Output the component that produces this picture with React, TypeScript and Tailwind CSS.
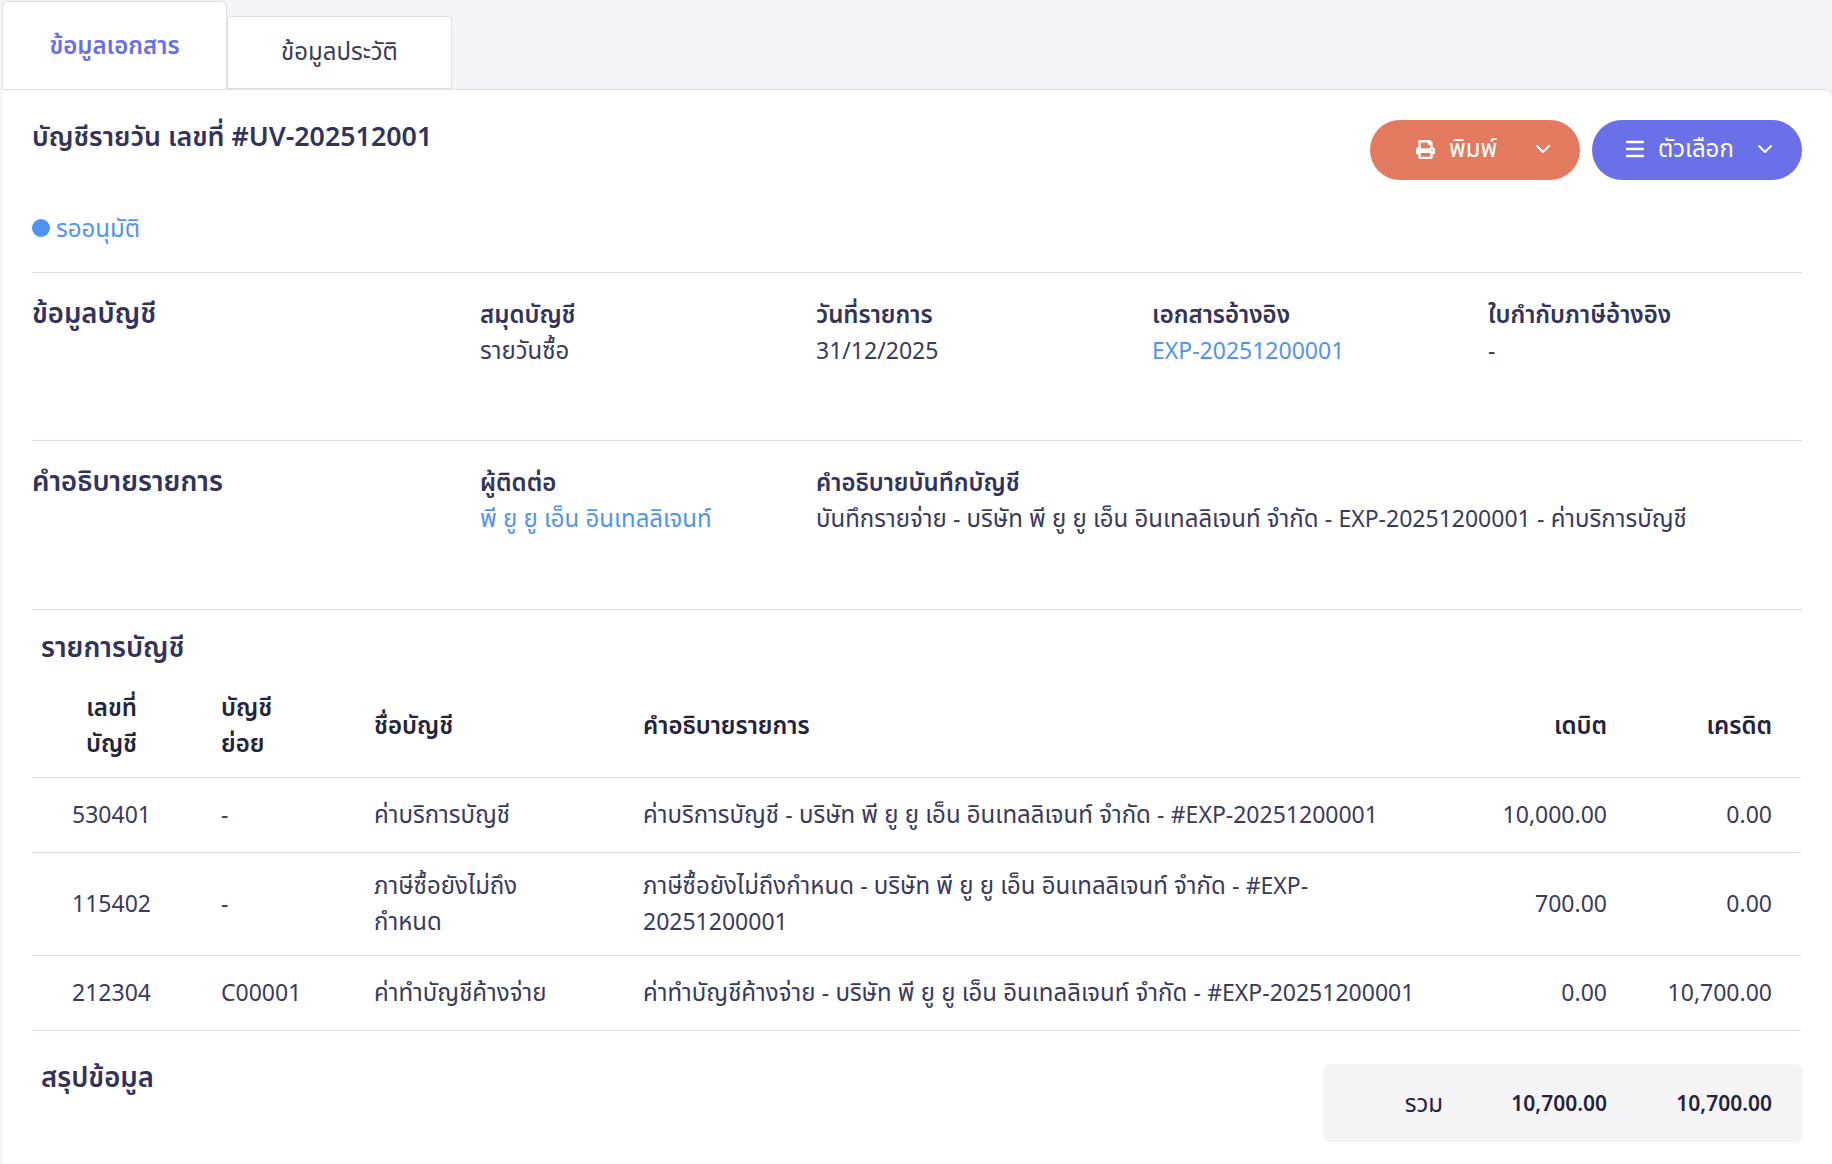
import { ChevronDown, Menu } from 'lucide-react'
import { FaPrint } from 'react-icons/fa'

const rows = [
  { code: '530401', sub: '-', name: 'ค่าบริการบัญชี', desc: 'ค่าบริการบัญชี - บริษัท พี ยู ยู เอ็น อินเทลลิเจนท์ จำกัด - #EXP-20251200001', debit: '10,000.00', credit: '0.00' },
  { code: '115402', sub: '-', name: 'ภาษีซื้อยังไม่ถึงกำหนด', desc: 'ภาษีซื้อยังไม่ถึงกำหนด - บริษัท พี ยู ยู เอ็น อินเทลลิเจนท์ จำกัด - #EXP-20251200001', debit: '700.00', credit: '0.00' },
  { code: '212304', sub: 'C00001', name: 'ค่าทำบัญชีค้างจ่าย', desc: 'ค่าทำบัญชีค้างจ่าย - บริษัท พี ยู ยู เอ็น อินเทลลิเจนท์ จำกัด - #EXP-20251200001', debit: '0.00', credit: '10,700.00' },
]

// latin runs sit a little smaller than the thai around them
function Mixed({ text }: { text: string }) {
  return (
    <>
      {text.split(/([A-Za-z0-9#,./-]+)/).map((part, i) =>
        i % 2 ? (
          <span key={i} className="text-[23px]">
            {part}
          </span>
        ) : (
          part
        ),
      )}
    </>
  )
}

function Field({ label, value, link }: { label: string; value: string; link?: boolean }) {
  return (
    <div className="pt-[2px]">
      <div className="font-semibold text-[#33335a]">{label}</div>
      <div className={link ? 'text-[#4f94f5]' : 'text-[#3a3a5c]'}>
        <Mixed text={value} />
      </div>
    </div>
  )
}

export default function App() {
  return (
    <div className="h-[1164px] overflow-hidden bg-[#f3f3f8] font-['Noto_Sans','Noto_Sans_Thai',sans-serif] text-[24px] leading-[36px]">
      <div className="flex h-[89px] items-end pl-[2px]">
        <div className="flex h-[88px] w-[225px] justify-center rounded-t-[6px] border-x border-t border-[#dfdfea] bg-white pt-[25px] font-semibold text-[#6a6fe8]">
          ข้อมูลเอกสาร
        </div>
        <div className="flex h-[73px] w-[225px] justify-center rounded-t-[4px] border border-[#dfdfea] bg-white pt-[16px] text-[#3a3a5c]">
          ข้อมูลประวัติ
        </div>
      </div>

      <div className="ml-[2px] h-[1075px] rounded-tr-[8px] border-t border-[#dfdfea] bg-white px-[30px]">
        <div className="flex h-[183px] items-start justify-between border-b border-[#dcdce8]">
          <div className="text-[#33335a]">
            <h1 className="mt-[28px] text-[26.8px] font-semibold">บัญชีรายวัน เลขที่ #UV-202512001</h1>
            <div className="mt-[56px] flex items-center gap-[6px] text-[#4f94f5]">
              <span className="h-[18px] w-[18px] rounded-full bg-[#4f94f5]" />
              รออนุมัติ
            </div>
          </div>
          <div className="mt-[30px] flex gap-[12px] text-white">
            <button className="flex h-[60px] w-[210px] items-center justify-between rounded-full bg-[#e37a5f] pb-[2px] pl-[46px] pr-[25px]">
              <span className="flex items-center gap-[14px]">
                <FaPrint className="h-[19px] w-[19px]" />
                <span className="-mt-[2px]">พิมพ์</span>
              </span>
              <ChevronDown className="h-[24px] w-[24px]" />
            </button>
            <button className="flex h-[60px] w-[210px] items-center justify-between rounded-full bg-[#6b70e8] pb-[2px] pl-[31px] pr-[25px]">
              <span className="flex items-center gap-[11px]">
                <Menu className="h-[24px] w-[24px]" strokeWidth={2.4} />
                <span className="-mt-[2px]">ตัวเลือก</span>
              </span>
              <ChevronDown className="h-[24px] w-[24px]" />
            </button>
          </div>
        </div>

        <div className="grid h-[168px] grid-cols-[448px_336px_336px_336px_1fr] border-b border-[#dcdce8] pt-[21px]">
          <h2 className="pt-[1px] text-[27.5px] font-semibold text-[#33335a]">ข้อมูลบัญชี</h2>
          <Field label="สมุดบัญชี" value="รายวันซื้อ" />
          <Field label="วันที่รายการ" value="31/12/2025" />
          <Field label="เอกสารอ้างอิง" value="EXP-20251200001" link />
          <Field label="ใบกำกับภาษีอ้างอิง" value="-" />
        </div>

        <div className="grid h-[169px] grid-cols-[448px_336px_1fr] border-b border-[#dcdce8] pt-[21px]">
          <h2 className="pt-[1px] text-[27.5px] font-semibold text-[#33335a]">คำอธิบายรายการ</h2>
          <Field label="ผู้ติดต่อ" value="พี ยู ยู เอ็น อินเทลลิเจนท์" link />
          <Field label="คำอธิบายบันทึกบัญชี" value="บันทึกรายจ่าย - บริษัท พี ยู ยู เอ็น อินเทลลิเจนท์ จำกัด - EXP-20251200001 - ค่าบริการบัญชี" />
        </div>

        <h2 className="mt-[19px] pl-[9px] text-[27.5px] font-semibold text-[#33335a]">รายการบัญชี</h2>
        <table className="mt-[16px] w-[1769px] table-fixed border-collapse text-[#3a3a5c]">
          <thead>
            <tr className="border-b border-[#dcdce8] text-[#23233b]">
              <th className="w-[159px] px-[30px] pb-[16px] pt-[8px] text-center font-semibold">เลขที่<br />บัญชี</th>
              <th className="w-[153px] px-[30px] pb-[16px] pt-[8px] text-left font-semibold">บัญชี<br />ย่อย</th>
              <th className="w-[269px] px-[30px] pb-[16px] pt-[8px] text-left font-semibold">ชื่อบัญชี</th>
              <th className="w-[847px] px-[30px] pb-[16px] pt-[8px] text-left font-semibold">คำอธิบายรายการ</th>
              <th className="w-[176px] pb-[16px] pl-[30px] pr-[29px] pt-[8px] text-right font-semibold">เดบิต</th>
              <th className="pb-[16px] pl-[30px] pr-[29px] pt-[8px] text-right font-semibold">เครดิต</th>
            </tr>
          </thead>
          <tbody>
            {rows.map((r) => (
              <tr key={r.code} className="border-b border-[#dcdce8]">
                <td className="px-[30px] pb-[20px] pt-[18px] text-center text-[23px]">{r.code}</td>
                <td className="px-[30px] pb-[20px] pt-[18px] text-[23px]">{r.sub}</td>
                <td className="pb-[16px] pl-[30px] pr-[40px] pt-[14px]">{r.name}</td>
                <td className="px-[30px] pb-[16px] pt-[14px]">
                  <Mixed text={r.desc} />
                </td>
                <td className="pb-[20px] pl-[30px] pr-[29px] pt-[18px] text-right text-[23px]">{r.debit}</td>
                <td className="pb-[20px] pl-[30px] pr-[29px] pt-[18px] text-right text-[23px]">{r.credit}</td>
              </tr>
            ))}
          </tbody>
        </table>

        <div className="mt-[26px] flex items-start justify-between">
          <h2 className="pl-[9px] pt-[2px] text-[27.5px] font-semibold text-[#33335a]">สรุปข้อมูล</h2>
          <div className="mt-[7px] flex h-[78px] w-[479px] items-center rounded-[6px] bg-[#f4f4f7] pr-[30px] text-[21px] text-[#23233b]">
            <span className="w-[120px] text-right text-[24px]">รวม</span>
            <span className="w-[164px] text-right font-semibold">10,700.00</span>
            <span className="flex-1 text-right font-semibold">10,700.00</span>
          </div>
        </div>
      </div>
    </div>
  )
}
